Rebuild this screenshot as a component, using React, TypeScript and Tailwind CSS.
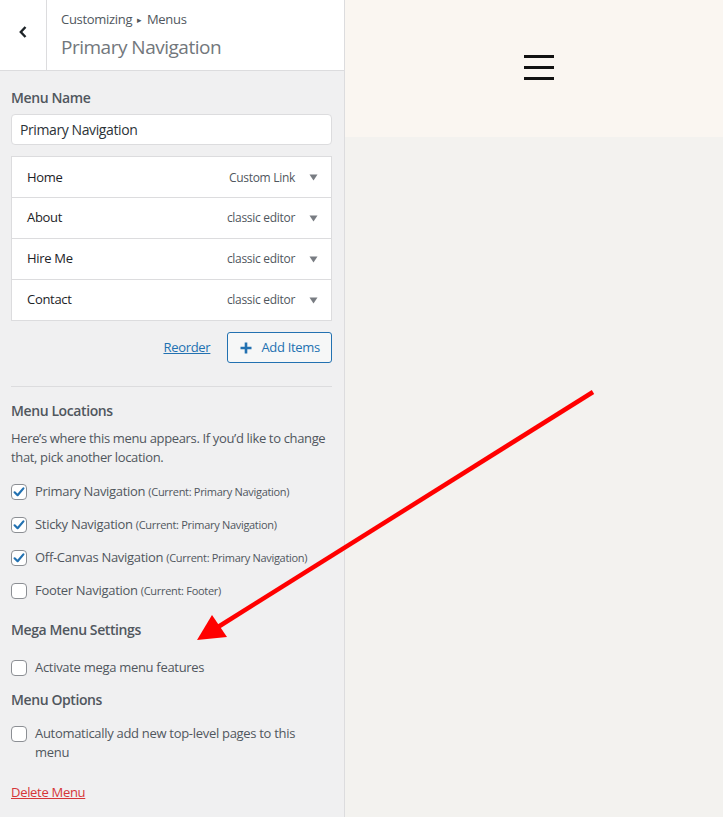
import React from "react";

const font = { fontFamily: '"Open Sans", "Noto Sans", sans-serif' };

function Check({ checked }: { checked?: boolean }) {
  return (
    <span className="flex h-4 w-4 shrink-0 items-center justify-center rounded-[4px] border border-[#8c8f94] bg-white">
      {checked && (
        <svg width="14" height="14" viewBox="0 0 14 14">
          <path d="M2.6 7.3 L5.6 10.2 L11.4 3.4" fill="none" stroke="#2271b1" strokeWidth="2.2" strokeLinecap="round" strokeLinejoin="round" />
        </svg>
      )}
    </span>
  );
}

function Loc({ name, cur, checked }: { name: string; cur: string; checked?: boolean }) {
  return (
    <div className="flex h-[33px] items-center gap-2">
      <Check checked={checked} />
      <span className="text-[13px] text-[#50575e]">
        {name} <span className="text-[11px]">(Current: {cur})</span>
      </span>
    </div>
  );
}

const items = [
  ["Home", "Custom Link"],
  ["About", "classic editor"],
  ["Hire Me", "classic editor"],
  ["Contact", "classic editor"],
];

export default function App() {
  return (
    <div className="relative flex h-[817px] w-[723px] overflow-hidden tracking-[-0.3px]" style={font}>
      <div className="flex w-[345px] shrink-0 flex-col border-r border-[#dcdcde] bg-[#f0f0f1]">
        <div className="flex h-[71px] shrink-0 border-b border-[#dcdcde] bg-white">
          <div className="flex w-[47px] shrink-0 items-center justify-center border-r border-[#dcdcde] pb-[6px]">
            <svg width="10" height="14" viewBox="0 0 10 14">
              <path d="M7.5 2 L2.8 7 L7.5 12" fill="none" stroke="#1d2327" strokeWidth="2.4" />
            </svg>
          </div>
          <div className="flex flex-col pl-[14px] pt-[9px]">
            <div className="text-[13px] leading-[20px] text-[#50575e]">
              Customizing<span className="mx-[5px] text-[9px] align-[1px]">▸</span>Menus
            </div>
            <div className="mt-[3px] text-[19px] leading-[28px] tracking-[-0.5px] text-[#72777c]">Primary Navigation</div>
          </div>
        </div>
        <div className="flex flex-col px-[11px] pr-[12px]">
          <div className="mt-[17px] text-[14px] font-semibold leading-[20px] tracking-[-0.4px] text-[#50575e]">Menu Name</div>
          <div className="mt-[6px] flex h-[31px] items-center rounded-[4px] border border-[#dcdcde] bg-white px-[8px] text-[14px] tracking-[-0.4px] text-[#2c3338]">
            Primary Navigation
          </div>
          <div className="mt-[11px] border border-[#dcdcde] bg-white">
            {items.map(([t, k], i) => (
              <div key={t} className={`flex items-center pl-[15px] pr-[13px] ${i > 0 ? "h-[41px] border-t border-[#dcdcde]" : "h-[40px] pt-[1px]"}`}>
                <span className="flex-1 text-[13px] font-medium text-[#1d2327]">{t}</span>
                <span className="text-[12px] text-[#50575e]">{k}</span>
                <svg className="ml-[14px]" width="9" height="7" viewBox="0 0 9 7">
                  <path d="M0.5 0.5 L8.5 0.5 L4.5 6.5 Z" fill="#787c82" />
                </svg>
              </div>
            ))}
          </div>
          <div className="mt-[11px] flex items-center justify-end gap-[17px]">
            <a className="text-[13px] text-[#2271b1] underline">Reorder</a>
            <div className="flex h-[31px] items-center gap-[9px] rounded-[3px] border border-[#2271b1] bg-[#f6f7f7] pl-[12px] pr-[11px] text-[13px] text-[#2271b1]">
              <svg width="12" height="12" viewBox="0 0 12 12">
                <path d="M6 0.5 V11.5 M0.5 6 H11.5" stroke="#2271b1" strokeWidth="2.6" />
              </svg>
              Add Items
            </div>
          </div>
          <div className="mt-[23px] border-t border-[#dcdcde]" />
          <div className="mt-[14px] text-[14px] font-semibold leading-[20px] tracking-[-0.4px] text-[#50575e]">Menu Locations</div>
          <p className="mt-[8px] text-[13px] leading-[19px] tracking-[-0.35px] text-[#50575e]">
            Here’s where this menu appears. If you’d like to change that, pick another location.
          </p>
          <div className="mt-[8px] flex flex-col">
            <Loc name="Primary Navigation" cur="Primary Navigation" checked />
            <Loc name="Sticky Navigation" cur="Primary Navigation" checked />
            <Loc name="Off-Canvas Navigation" cur="Primary Navigation" checked />
            <Loc name="Footer Navigation" cur="Footer" />
          </div>
          <div className="mt-[13px] text-[14px] font-semibold leading-[20px] tracking-[-0.4px] text-[#50575e]">Mega Menu Settings</div>
          <div className="mt-[18px] flex items-center gap-2">
            <Check />
            <span className="text-[13px] text-[#50575e]">Activate mega menu features</span>
          </div>
          <div className="mt-[12px] text-[14px] font-semibold leading-[20px] tracking-[-0.4px] text-[#50575e]">Menu Options</div>
          <div className="mt-[14px] flex items-start gap-2">
            <span className="mt-[2px]"><Check /></span>
            <span className="text-[13px] leading-[19px] text-[#50575e]">Automatically add new top-level pages to this menu</span>
          </div>
          <a className="mt-[21px] text-[13px] text-[#d63638] underline">Delete Menu</a>
        </div>
      </div>
      <div className="flex flex-1 flex-col bg-[#f3f2ef]">
        <div className="flex h-[137px] items-start justify-center bg-[#faf6f1] pl-[10px] pt-[55px]">
          <div className="flex w-[30px] flex-col gap-[8px]">
            <div className="h-[3px] bg-[#111]" />
            <div className="h-[3px] bg-[#111]" />
            <div className="h-[3px] bg-[#111]" />
          </div>
        </div>
      </div>
      <svg className="pointer-events-none absolute left-0 top-0" width="723" height="817">
        <line x1="593" y1="392" x2="218" y2="627" stroke="#ff0000" strokeWidth="4.5" />
        <polygon points="197,640 212,615 227,637" fill="#ff0000" />
      </svg>
    </div>
  );
}
